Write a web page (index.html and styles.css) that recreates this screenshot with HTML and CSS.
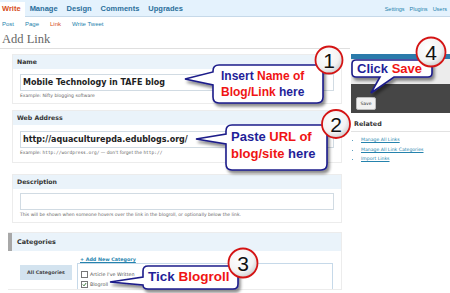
FILE: index.html
```html
<!DOCTYPE html>
<html lang="en">
<head>
  <meta charset="UTF-8">
  <title>Add Link</title>
  <link rel="stylesheet" href="styles.css">
</head>
<body>
  <div class="topnav">
    <ul class="tabs">
      <li class="current">Write</li>
      <li>Manage</li>
      <li>Design</li>
      <li>Comments</li>
      <li>Upgrades</li>
    </ul>
    <ul class="usernav">
      <li>Settings</li>
      <li>Plugins</li>
      <li>Users</li>
    </ul>
  </div>

  <ul class="subnav">
    <li>Post</li>
    <li>Page</li>
    <li class="current">Link</li>
    <li>Write Tweet</li>
  </ul>

  <h2 class="title">Add Link</h2>

  <div class="content">
    <div class="main">
      <div class="panel panel-name">
        <h3>Name</h3>
        <div class="inside">
          <input class="field" type="text" value="Mobile Technology in TAFE blog" readonly>
          <p class="hint">Example: Nifty blogging software</p>
        </div>
      </div>

      <div class="panel panel-url">
        <h3>Web Address</h3>
        <div class="inside">
          <input class="field" type="text" value="http://aquaculturepda.edublogs.org/" readonly>
          <p class="hint">Example: <code>http://wordpress.org/</code> — don't forget the <code>http://</code></p>
        </div>
      </div>

      <div class="panel panel-desc">
        <h3>Description</h3>
        <div class="inside">
          <input class="field" type="text" value="" readonly>
          <p class="hint">This will be shown when someone hovers over the link in the blogroll, or optionally below the link.</p>
        </div>
      </div>

      <div class="panel panel-cats">
        <div class="cats-head">
          <span class="handle"></span>
          <h3>Categories</h3>
        </div>
        <div class="cats-inside">
          <a class="add-cat">+ Add New Category</a>
          <div class="cats-body">
            <div class="cats-tab">All Categories</div>
            <ul class="checklist">
              <li><span class="box"></span>Article I've Written</li>
              <li><span class="box checked"><svg viewBox="0 0 6 6" width="6" height="6"><path d="M1 3 L2.4 4.6 L5 1.2" fill="none" stroke="#2a6f2a" stroke-width="1.1"/></svg></span>Blogroll</li>
            </ul>
          </div>
        </div>
      </div>
    </div>

    <div class="side">
      <div class="savebox">
        <div class="savebar"></div>
        <div class="savegap"></div>
        <div class="saveactions"><span class="btn">Save</span></div>
      </div>
      <h4>Related</h4>
      <ul class="related">
        <li><a>Manage All Links</a></li>
        <li><a>Manage All Link Categories</a></li>
        <li><a>Import Links</a></li>
      </ul>
    </div>
  </div>

  <svg class="notes" width="450" height="293" viewBox="0 0 450 293">
    <defs>
      <filter id="shadow" x="-20%" y="-30%" width="150%" height="180%">
        <feDropShadow dx="2" dy="3" stdDeviation="1.5" flood-color="#000" flood-opacity="0.45"/>
      </filter>
      <radialGradient id="ball" cx="40%" cy="35%" r="70%">
        <stop offset="0" stop-color="#fff"/>
        <stop offset="0.65" stop-color="#f3f3f3"/>
        <stop offset="1" stop-color="#c9c9c9"/>
      </radialGradient>
    </defs>

    <!-- 1: name -->
    <g class="bubble">
      <path d="M219,65 H317 Q323,65 323,71 V97 Q323,103 317,103 H219 Q213,103 213,97 V85 L185,79 L213,72 V71 Q213,65 219,65 Z"/>
      <text class="t12" x="221" y="80"><tspan class="navy">Insert </tspan><tspan class="red">Name of</tspan></text>
      <text class="t12" x="221" y="96"><tspan class="red">Blog/Link </tspan><tspan class="navy">here</tspan></text>
    </g>

    <!-- 2: url -->
    <g class="bubble">
      <path d="M232,125 H321 Q327,125 327,131 V164 Q327,170 321,170 H232 Q226,170 226,164 V144 L196,139 L226,134 V131 Q226,125 232,125 Z"/>
      <text class="t13" x="231" y="141"><tspan class="navy">Paste </tspan><tspan class="red">URL of</tspan></text>
      <text class="t13" x="231" y="158"><tspan class="red">blog/site </tspan><tspan class="navy">here</tspan></text>
    </g>

    <!-- 3: blogroll -->
    <g class="bubble">
      <path d="M148,266 H233 Q238,266 238,271 V284 Q238,289 233,289 H148 Q143,289 143,285 L110,282 L143,277 V271 Q143,266 148,266 Z"/>
      <text class="t135" x="148" y="281"><tspan class="navy">Tick </tspan><tspan class="red">Blogroll</tspan></text>
    </g>

    <!-- 4: save -->
    <g class="bubble">
      <path d="M356,60 H428 Q432,60 432,64 V73 Q432,77 428,77 H394 L371,93 L380,77 H356 Q352,77 352,73 V64 Q352,60 356,60 Z"/>
      <text class="t13" x="357" y="73"><tspan class="navy">Click </tspan><tspan class="red">Save</tspan></text>
    </g>

    <g class="num">
      <circle cx="329" cy="60" r="13.5"/>
      <text x="329" y="68">1</text>
      <circle cx="336" cy="124" r="14"/>
      <text x="336" y="132">2</text>
      <circle cx="243" cy="263" r="14.5"/>
      <text x="243" y="271">3</text>
      <circle cx="431" cy="52" r="14.5"/>
      <text x="431" y="60">4</text>
    </g>
  </svg>
</body>
</html>
```

FILE: styles.css
```css
body {
  margin: 0;
  font-family: 'DejaVu Sans', Verdana, sans-serif;
  background: #fff;
  color: #333;
  width: 450px;
  height: 293px;
  overflow: hidden;
  position: relative;
}

ul {
  list-style: none;
  margin: 0;
  padding: 0;
}

a {
  color: #2583ad;
  text-decoration: underline;
}

/* top navigation */

.topnav {
  display: flex;
  justify-content: space-between;
  height: 16px;
  background: #e4f2fd;
  border-bottom: 1px solid #c6d9e9;
}

.tabs {
  display: flex;
  padding-top: 2px;
}

.tabs li {
  font-family: 'Liberation Sans', Arial, sans-serif;
  font-weight: bold;
  font-size: 7.5px;
  line-height: 13px;
  padding: 0 4.5px;
  color: #2a6f9b;
}

.tabs li:first-child {
  padding-left: 2px;
}

.tabs .current {
  background: #fff;
  color: #d54e21;
  height: 15px;
}

.usernav {
  display: flex;
  gap: 5px;
  padding-right: 3px;
  font-family: 'Liberation Sans', Arial, sans-serif;
  font-size: 5.5px;
  line-height: 19px;
  color: #2583ad;
}

.subnav {
  display: flex;
  gap: 11px;
  height: 12px;
  padding: 1px 2px 0;
  font-family: 'Liberation Sans', Arial, sans-serif;
  font-size: 6px;
  line-height: 13px;
  color: #2583ad;
}

.subnav .current {
  color: #d54e21;
}

.title {
  margin: 0 100px 0 0;
  padding: 2px 0 2px 2px;
  font-family: 'Liberation Serif', Georgia, serif;
  font-weight: normal;
  font-size: 12.5px;
  line-height: 14px;
  color: #666;
  border-bottom: 1px solid #dfdfdf;
}

/* layout */

.content {
  display: flex;
  align-items: flex-start;
  margin-top: 5px;
}

.main {
  width: 330px;
  margin-left: 12px;
}

.side {
  width: 99px;
  margin-left: 9px;
}

/* panels */

.panel {
  border: 1px solid #ececec;
  background: #fff;
}

.panel h3 {
  margin: 0;
  height: 14px;
  padding-left: 4px;
  background: #eaf3fa;
  font-size: 6.2px;
  line-height: 14px;
  color: #333;
}

.inside {
  padding: 5px 7px 4px;
}

.panel-url {
  margin-top: 6px;
}

.panel-url .inside {
  padding: 6px 7px 6px;
}

.panel-desc {
  margin-top: 11px;
}

.panel-desc .inside {
  padding: 4px 7px 4px;
}

.field {
  display: block;
  box-sizing: border-box;
  width: 100%;
  height: 17px;
  margin: 0;
  padding: 0 2px;
  border: 1px solid #d1dbe3;
  border-radius: 0;
  background: #fff;
  font-family: 'DejaVu Sans', Verdana, sans-serif;
  font-weight: bold;
  font-size: 8px;
  color: #222;
  outline: none;
}

.hint {
  margin: 2px 0 0;
  font-size: 4.5px;
  line-height: 6px;
  color: #666;
}

.hint code {
  font-family: 'DejaVu Sans Mono', monospace;
  font-size: 4.5px;
}

/* categories */

.panel-cats {
  margin-top: 9px;
  margin-left: -4px;
  border-left: none;
  height: 56px;
  overflow: hidden;
}

.cats-head {
  display: flex;
}

.handle {
  width: 4px;
  height: 18px;
  background: #a8a8a8;
}

.panel-cats h3 {
  flex: 1;
  height: 18px;
  line-height: 18px;
  padding-left: 5px;
  font-size: 6.4px;
}

.cats-inside {
  padding: 5px 8px 0 12px;
}

.add-cat {
  display: block;
  margin-left: 60px;
  font-weight: bold;
  font-size: 4.8px;
  line-height: 7px;
}

.cats-body {
  display: flex;
  align-items: flex-start;
  margin-top: 2px;
}

.cats-tab {
  width: 52px;
  height: 15px;
  background: #d3e3ef;
  font-weight: bold;
  font-size: 4.8px;
  line-height: 15px;
  text-align: center;
  color: #444;
}

.checklist {
  flex: 1;
  height: 30px;
  margin-left: 5px;
  margin-top: -2px;
  padding: 5px 3px 0;
  border: 1px solid #c6d9e9;
  font-size: 4.8px;
  color: #555;
}

.checklist li {
  display: flex;
  align-items: center;
  gap: 2px;
  height: 10px;
}

.box {
  display: inline-flex;
  width: 5px;
  height: 5px;
  border: 0.8px solid #777;
  background: #fff;
}

.box svg {
  width: 5px;
  height: 5px;
}

/* sidebar */

.savebox {
  display: flex;
  flex-direction: column;
}

.savebar {
  height: 5px;
  background: #2b7bab;
}

.savegap {
  height: 25px;
  background: #ececec;
}

.saveactions {
  height: 29px;
  padding: 6px 0 0 5px;
  box-sizing: border-box;
  background: #464646;
}

.btn {
  display: inline-block;
  width: 20px;
  height: 13px;
  box-sizing: border-box;
  border: 1px solid #bbb;
  border-radius: 2px;
  background: #f1f1f1;
  font-size: 4.5px;
  line-height: 11px;
  text-align: center;
  color: #333;
}

.side h4 {
  margin: 8px 0 0;
  padding: 0 0 3px 3px;
  font-size: 6.4px;
  line-height: 7px;
  color: #333;
  border-bottom: 1px solid #e2e2e2;
}

.related {
  list-style: disc;
  padding-left: 10px;
  margin-top: 3px;
  font-size: 4.6px;
  line-height: 9.5px;
  color: #2583ad;
}

/* annotation callouts drawn over the page */

.notes {
  position: absolute;
  top: 0;
  left: 0;
  pointer-events: none;
}

.bubble path {
  fill: #fff;
  stroke: #1d1d8a;
  stroke-width: 1.6;
  filter: url(#shadow);
}

.bubble text {
  font-family: 'Liberation Sans', Arial, sans-serif;
  font-weight: bold;
}

.t12 { font-size: 12px; }
.t13 { font-size: 13px; }
.t135 { font-size: 13.5px; }

.navy { fill: #1f1f99; }
.red { fill: #f01414; }

.num circle {
  fill: url(#ball);
  stroke: #d41414;
  stroke-width: 1.8;
}

.num text {
  font-family: 'Liberation Sans', Arial, sans-serif;
  font-size: 21px;
  text-anchor: middle;
  fill: #111;
}
```
